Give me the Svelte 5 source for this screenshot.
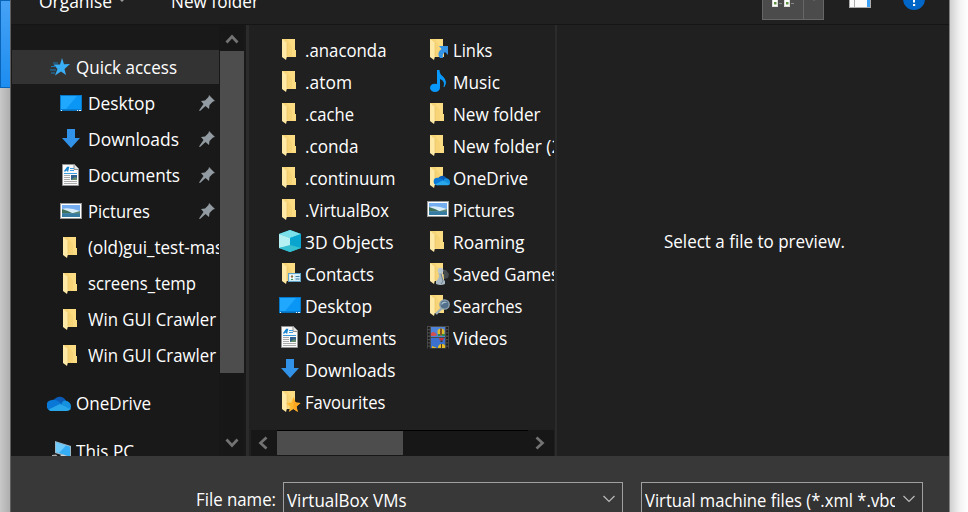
<script>
  const nav = [
    { icon: 'desktop', text: 'Desktop', w: 67, pin: true },
    { icon: 'download', text: 'Downloads', w: 91, pin: true },
    { icon: 'document', text: 'Documents', w: 92, pin: true },
    { icon: 'picture', text: 'Pictures', w: 62, pin: true },
    { icon: 'folder', text: '(old)gui_test-mas', w: 135 },
    { icon: 'folder', text: 'screens_temp', w: 108 },
    { icon: 'folder', text: 'Win GUI Crawler', w: 128 },
    { icon: 'folder', text: 'Win GUI Crawler', w: 128 }
  ];
  const columns = [
    [
      { icon: 'folder', text: '.anaconda', w: 81.5 },
      { icon: 'folder', text: '.atom', w: 47 },
      { icon: 'folder', text: '.cache', w: 49 },
      { icon: 'folder', text: '.conda', w: 53.5 },
      { icon: 'folder', text: '.continuum', w: 90.5 },
      { icon: 'folder', text: '.VirtualBox', w: 84 },
      { icon: 'cube', text: '3D Objects', w: 88.5 },
      { icon: 'contacts', text: 'Contacts', w: 69 },
      { icon: 'desktop', text: 'Desktop', w: 67 },
      { icon: 'document', text: 'Documents', w: 91.5 },
      { icon: 'download', text: 'Downloads', w: 90.5 },
      { icon: 'favourites', text: 'Favourites', w: 80.5 }
    ],
    [
      { icon: 'links', text: 'Links', w: 39.5 },
      { icon: 'music', text: 'Music', w: 47 },
      { icon: 'folder', text: 'New folder', w: 87.5 },
      { icon: 'folder', text: 'New folder (2)', w: 113.5 },
      { icon: 'clouddir', text: 'OneDrive', w: 75 },
      { icon: 'picture', text: 'Pictures', w: 61.5 },
      { icon: 'folder', text: 'Roaming', w: 71.5 },
      { icon: 'games', text: 'Saved Games', w: 106 },
      { icon: 'search', text: 'Searches', w: 69.5 },
      { icon: 'video', text: 'Videos', w: 54.5 }
    ]
  ];

  // Condenses a label horizontally to the given width.
  function fit(node, width) {
    node.style.transform = `scaleX(${width / node.getBoundingClientRect().width})`;
  }
</script>

{#snippet label(text, w)}
  <span class="label" use:fit={w}>{text}</span>
{/snippet}

{#snippet chevron(d)}
  <svg class="chev" width="14" height="14" viewBox="0 0 14 14"><path {d} fill="none" stroke="#737373" stroke-width="2.7" /></svg>
{/snippet}

{#snippet cloud()}
  <path d="M7 7.6A7 7 0 0 1 18.6 8.2L20 13 8 14Z" fill="#0a5cb8" />
  <path d="M5 19a5.3 5.3 0 0 1 0-11c3.8-1 7 1.7 10 4l-9 7Z" fill="#0a78d6" />
  <path d="M15 10.5q2-3 5-1.5 4 1.5 4 5.5 0 3-1 3.5l-9-4Z" fill="#1490df" />
  <path d="M1.500 17.500 13 12l10.300 5q-1 2-3.300 2H5q-2 0-3.500-1.500Z" fill="#28a8ea" />
{/snippet}

{#snippet icon(name)}
  <svg class="icon" width="24" height="24" viewBox="0 0 24 24">
    {#if ['folder', 'contacts', 'favourites', 'links', 'clouddir', 'games', 'search'].includes(name)}
      <path d="M4 1h13v11h1v7H8L4 18Z" fill="#f6d477" />
      <path d="M9 1h8v11h1v7h-4V9Z" fill="#fbdc82" />
      <path d="M4 1l5 4v13l-1 4-4-3Z" fill="#ffe9a6" />
      <path d="M9 5v13" stroke="#e8c466" stroke-width=".7" />
    {/if}
    {#if name === 'desktop'}
      <rect x="1.500" y="3.500" width="21" height="15" fill="#0a96f5" stroke="#0878c8" />
      <path d="M2 4h16L7 17H2Z" fill="#20a8ff" />
      <path d="M2 18h20" stroke="#0765ac" />
      <path d="M2 18.500h1M18 18.500h1M20 18.500h2" stroke="#dff4ff" />
    {:else if name === 'download'}
      <path d="M8 1h8v9h5l-9 10-9-10h5Z" fill="#3292e8" />
    {:else if name === 'document'}
      <path d="M3.500.500h12l4 4v17h-16Z" fill="#fafafa" stroke="#929290" />
      <path d="M15 .500v5h4.500" fill="#e4e4e4" stroke="#929290" />
      <path d="M5.500 7.500l3-4h1l-1 4M7 6h2" fill="none" stroke="#1685d0" stroke-width="1.300" />
      <path d="M11 4.500h4M11 6.500h4M5 9.500h13" stroke="#3b9ddf" />
      <path d="M5 11.500h6M5 13.500h6M5 15.500h6M5 17.500h13M5 19.500h13" stroke="#aaa" />
      <rect x="12" y="11" width="6" height="5" fill="#2f5f8c" /><path d="M12 16l4-3 2 1v2Z" fill="#638b6b" />
    {:else if name === 'picture'}
      <rect x="1.500" y="3.500" width="21" height="15" fill="#fff" stroke="#999" />
      <rect x="3" y="5" width="18" height="12" fill="#75adf1" />
      <path d="M3 9q7-2 18 2v2H3Z" fill="#d9edf8" />
      <path d="M3 9q7 2 11 4.500H3Z" fill="#41705b" /><path d="M14 13l7-2v3h-9Z" fill="#5d8878" />
      <path d="M3 13.500h18V17H3Z" fill="#367ba2" />
    {:else if name === 'cube'}
      <path d="M12 0l11 4v14l-11 4L1 18V4Z" fill="#16b9d4" />
      <path d="M1 4l11-4 11 4-11 4Z" fill="#7be0ea" /><path d="M1 4l11 4v8L1 18Z" fill="#b5f0f3" />
      <path d="M12 8l11-4v14l-11-3Z" fill="#0aa5ce" /><path d="M1 18l11-3 11 3-11 4Z" fill="#35bfd0" />
    {:else if name === 'contacts'}
      <rect x="10.500" y="11.500" width="12" height="8" fill="#d5edf7" stroke="#5fa3cb" />
      <rect x="12" y="13" width="4" height="5" fill="#fff" /><circle cx="14" cy="14.500" r="1.200" fill="#8a6c45" /><path d="M12.500 18q1.500-3 3 0" fill="#37936a" />
      <path d="M17.500 14.500h4M17.500 17h4" stroke="#427fa5" />
    {:else if name === 'favourites'}
      <path d="M15.500 7l2 5.500 5 .5-4 3.500 1.300 5.500-4.300-3-4.700 3 1.500-5.500-4-3.500 5-.5Z" fill="#fdb832" />
      <path d="M15.500 7l2 5.500 5 .5-4 3.500 1.300 5.500-4.300-3Z" fill="#ffa620" />
    {:else if name === 'links'}
      <path d="M13 8h9v9l-3-3q-3 2-2 6h-3q-4-5 1.500-9Z" fill="#3593e6" />
    {:else if name === 'music'}
      <path d="M11 0h2.500q0 4 3.500 6.500 5 5 1.500 10.500h-1q2-6-3.500-8v8.500A5 4.200 0 1 1 11 14Z" fill="#0899fb" />
    {:else if name === 'clouddir'}
      <g transform="translate(8 6.500) scale(.67)">{@render cloud()}</g>
    {:else if name === 'games'}
      <path d="M17 8h3l3 4-1 4-4 1Z" fill="#454a4f" />
      <circle cx="14.500" cy="8.500" r="2.800" fill="#b9c7d0" />
      <path d="M12 11h5l-1 2q.5 4 3 6v3q-4 2-9 0v-3q3-2 3-6Z" fill="#a8b8c3" />
      <path d="M15 12l2 7-2 3" stroke="#70828f" fill="none" />
    {:else if name === 'search'}
      <path d="M16 14l-6 6" stroke="#9caeb8" stroke-width="2.400" />
      <circle cx="18.500" cy="10.500" r="4.700" fill="#52708a" stroke="#91a5b1" stroke-width="1.300" />
      <path d="M15.500 9q3-3 6 0-3-1-6 2Z" fill="#a5bdce" />
    {:else if name === 'video'}
      <path d="M1 0h22v22.500H1Z" fill="#4a4a4a" />
      <path d="M2.800 1v22M21.200 1v22" stroke="#181818" stroke-width="1.800" stroke-dasharray="2 1.300" />
      <rect x="5" y="1" width="14" height="10" fill="#4e83d8" /><rect x="5" y="12" width="14" height="10" fill="#3b70ce" />
      <path d="M5 7q3-3 6 2l-2 1H5Z" fill="#d24f52" />
      <circle cx="15" cy="6" r="3.600" fill="#e0bd28" /><path d="M15 2.500v7" stroke="#673b28" stroke-width="1.600" /><path d="M12 8h2v2h-2ZM16 8h3v2h-3Z" fill="#328c47" />
      <path d="M13 12h5l-1 2.500h-3Z" fill="#c63138" /><path d="M14.500 14.500h2v1.500h-2Z" fill="#493429" />
      <path d="M12 22q0-4 4-4t3 4M6 20l5 2H6Z" fill="#e7bd26" /><path d="M15.500 18v4" stroke="#493429" />
    {:else if name === 'star'}
      <path d="M15 3l2 6.300 6-.3-5.500 5 1.500 6-5-3.500-6 4 2.500-6.500-4-4.500h6.500Z" fill="#39aef5" />
      <path d="M6 8h5M4 11.500h5M3 15h6M4 18h4" stroke="#167cba" stroke-width="1.100" />
    {:else if name === 'cloud'}
      {@render cloud()}
    {:else if name === 'pc'}
      <path d="M8 1l16 5v12L8 13Z" fill="#9ab8c8" /><path d="M9 2.500l14 4.200v10L9 12Z" fill="#36aef5" />
      <path d="M9 2.500l10 3L12 13l-3-1Z" fill="#70cafa" />
      <path d="M5 15l4-.5 2 2H5Z" fill="#aaa" /><path d="M12 17q3-4 7-1v3h-9Z" fill="#d0d5d8" />
    {/if}
  </svg>
{/snippet}

<div class="screen">
  <div class="left-edge"><div class="blue"></div></div>
  <div class="window">
    <div class="toolbar">
      <div class="tools">
        <div class="organise">{@render label('Organise', 73)}</div>
        <svg class="caret" width="8" height="5" viewBox="0 0 8 5"><path d="M1 0h6L4 3Z" fill="#999" /></svg>
        <div class="new">{@render label('New folder', 88)}</div>
        <div class="view">
          <svg width="40" height="38" viewBox="0 0 40 38">
            {#each [9, 21] as x}
              {#each [6, 17] as y}
                <rect x={x + 0.5} y={y + 0.5} width="5" height="8" fill="#fff" stroke="#ddd" />
                <rect x={x + 2} y={y + 4} width="2.500" height="2.500" fill="#5c9440" />
                <path d="M{x + 7} {y + 5.5}h3" stroke="#888" />
              {/each}
            {/each}
          </svg>
          <div class="drop"><svg width="6" height="4"><path d="M1 0h4L3 3Z" fill="#888" /></svg></div>
        </div>
        <svg class="pane" width="22" height="20" viewBox="0 0 22 20">
          <rect x=".500" y=".500" width="21" height="19" fill="#fafafa" stroke="#aaa" /><path d="M5.500 1v18" stroke="#aaa" /><path d="M19.500 1v18" stroke="#3ca0f4" stroke-width="3" />
        </svg>
        <svg class="help" width="22" height="22" viewBox="0 0 22 22">
          <circle cx="11" cy="11" r="11" fill="#0067c8" />
          <path d="M8 7q0-3 3-3t3 3q0 2-3 3.500v4" fill="none" stroke="#fff" stroke-width="2" /><rect x="10" y="16" width="2.200" height="2" fill="#fff" />
        </svg>
      </div>
    </div>
    <div class="main">
      <nav>
        <div class="tree">
          <div class="row root quick">{@render icon('star')}{@render label('Quick access', 101)}</div>
          {#each nav as n}
            <div class="row">
              {@render icon(n.icon)}{@render label(n.text, n.w)}
              {#if n.pin}
                <svg class="pin" width="16" height="16" viewBox="0 0 16 16"><path d="M10 0l6 6-2 .5-3.500 3.500-.5 4-3.500-3L1 16l-1-.5L4.500 9 2 6l4-.5L9.500 2Z" fill="#929ba1" /></svg>
              {/if}
            </div>
          {/each}
          <div class="row root cloudrow">{@render icon('cloud')}{@render label('OneDrive', 75)}</div>
          <div class="row root last">{@render icon('pc')}{@render label('This PC', 58)}</div>
        </div>
        <div class="vscroll">
          {@render chevron('M1.500 10.500 7 4.500l5.500 6')}
          <div class="vthumb"></div>
          {@render chevron('M1.500 3.500 7 9.500l5.500-6')}
        </div>
      </nav>
      <section class="files">
        <div class="cols">
          {#each columns as column}
            <div class="col">
              {#each column as f}
                <div class="file">{@render icon(f.icon)}{@render label(f.text, f.w)}</div>
              {/each}
            </div>
          {/each}
        </div>
        <div class="hscroll">
          {@render chevron('M10.500 1.500 4.500 7l6 5.500')}
          <div class="htrack"><div class="hthumb"></div></div>
          {@render chevron('M3.500 1.500 9.500 7l-6 5.500')}
        </div>
      </section>
      <section class="preview">{@render label('Select a file to preview.', 181)}</section>
    </div>
    <footer>
      <div class="name">{@render label('File name:', 80)}</div>
      <div class="field combo">
        <div class="value">{@render label('VirtualBox VMs', 119.5)}</div>
        <svg width="12" height="8" viewBox="0 0 12 8"><path d="M.500 1 6 6.500 11.500 1" fill="none" stroke="#bbb" stroke-width="1.200" /></svg>
      </div>
      <div class="field type">
        <div class="value">{@render label('Virtual machine files (*.xml *.vbox)', 268)}</div>
        <svg width="12" height="8" viewBox="0 0 12 8"><path d="M.500 1 6 6.500 11.500 1" fill="none" stroke="#bbb" stroke-width="1.200" /></svg>
      </div>
    </footer>
  </div>
  <div class="right-edge"></div>
</div>

<style>
  .screen {
    display: flex;
    width: 968px;
    height: 512px;
    overflow: hidden;
    font: 17.5px/24px 'Open Sans', 'Noto Sans', sans-serif;
    color: #fff;
  }
  svg { display: block; flex: none; }
  .label { display: inline-block; white-space: pre; transform-origin: left center; flex: none; }
  .left-edge {
    width: 11px;
    box-sizing: border-box;
    flex: none;
    background: linear-gradient(90deg, #c8c8c8, #aeaeae);
    border-right: 1px solid #5e5e5e;
  }
  .blue {
    height: 88px;
    box-sizing: border-box;
    background: linear-gradient(#46a2f5, #1d8df0);
    border: 1px solid #0864b8;
    border-right: 0;
  }
  .window { width: 938px; flex: none; display: flex; flex-direction: column; background: #202020; }
  .toolbar {
    height: 25px;
    box-sizing: border-box;
    flex: none;
    display: flex;
    align-items: flex-end;
    overflow: hidden;
    border-bottom: 1px solid #151515;
  }
  .tools { display: flex; align-items: center; height: 46px; width: 938px; flex: none; }
  .organise { width: 79px; margin-left: 28px; }
  .caret { margin-right: 45px; }
  .new { width: 591px; }
  .view {
    display: flex;
    width: 62px;
    height: 40px;
    box-sizing: border-box;
    background: #4b4b4b;
    border: 1px solid #666;
    margin-top: -2px;
  }
  .drop { flex: 1; border-left: 1px solid #666; display: flex; align-items: center; justify-content: center; }
  .pane { margin: -6px 32px 0 25px; }
  .help { margin-top: -4px; }
  .main { height: 431px; flex: none; display: flex; }
  nav { width: 238px; box-sizing: border-box; flex: none; display: flex; background: #191919; border-right: 3px solid #2b2b2b; }
  .tree { width: 208px; overflow: hidden; flex: none; padding-top: 25px; box-sizing: border-box; }
  .row { display: flex; align-items: center; height: 36px; padding-left: 48px; gap: 5px; position: relative; }
  .root { padding-left: 36px; }
  .quick { height: 34px; background: #333; margin: 0 0 2px 1px; padding-left: 35px; }
  .cloudrow, .last { margin-top: 12px; }
  .row:not(.quick) .label { margin-top: -2px; }
  .pin { position: absolute; left: 188px; top: 9px; }
  .vscroll {
    width: 25px;
    height: 431px;
    background: #171717;
    display: flex;
    flex-direction: column;
    align-items: center;
    box-sizing: border-box;
    padding: 7px 0 6px;
  }
  .vthumb { width: 24px; height: 322px; background: #4d4d4d; margin: 5px 0 auto 1px; }
  .files { width: 308px; flex: none; border-right: 2px solid #2b2b2b; box-sizing: border-box; display: flex; flex-direction: column; }
  .cols { height: 405px; box-sizing: border-box; padding: 9px 0 0 29px; display: flex; overflow: hidden; width: 305px; }
  .col { width: 148px; flex: none; }
  .file { height: 32px; display: flex; align-items: center; gap: 3px; }
  .hscroll { height: 26px; margin: 0 1px 0 2px; background: #171717; display: flex; align-items: center; justify-content: space-between; padding: 0 7px 0 5px; }
  .htrack { width: 251px; height: 26px; border-top: 1px solid #000; box-sizing: border-box; margin-right: auto; margin-left: 7px; }
  .hthumb { width: 126px; height: 24px; background: #4d4d4d; }
  .preview { flex: 1; padding: 204px 0 0 107px; }
  footer { height: 56px; flex: none; background: #383838; display: flex; padding-top: 26px; box-sizing: border-box; }
  .name { width: 87px; margin-left: 185px; padding-top: 5px; flex: none; }
  .field {
    height: 36px;
    box-sizing: border-box;
    border: 1px solid #a0a0a0;
    background: #333;
    display: flex;
    align-items: center;
    flex: none;
  }
  .field svg { margin-top: -2px; }
  .combo { width: 340px; background: #383838; margin-right: 18px; }
  .type { width: 282px; }
  .value { overflow: hidden; margin-left: 3px; margin-right: 8px; flex: none; }
  .combo .value { width: 308px; }
  .type .value { width: 250px; }
  .type .value { margin-top: -1px; }
  .right-edge {
    flex: 1;
    border-left: 1px solid #808080;
    background: linear-gradient(90deg, #d0d0d0, #f3f3f3 55%, #fff);
  }
</style>
